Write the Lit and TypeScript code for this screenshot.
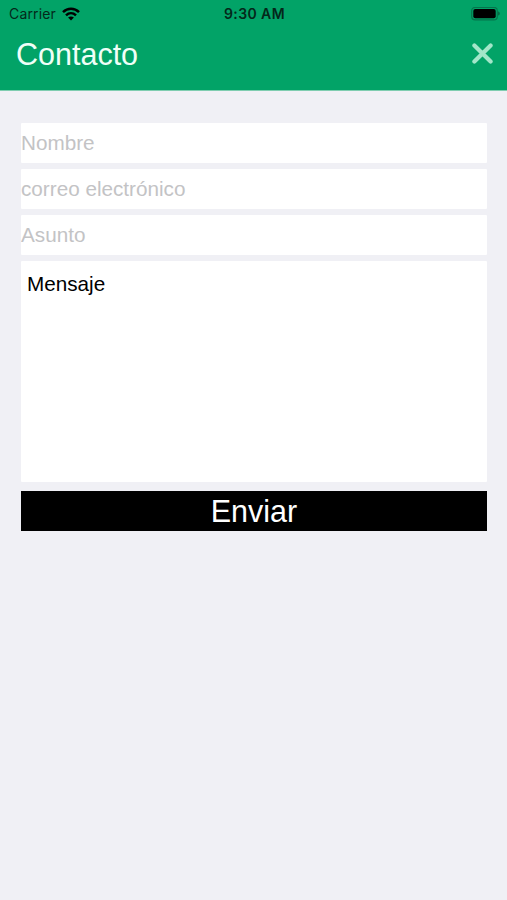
import { LitElement, html, css } from "lit";
import { customElement } from "lit/decorators.js";

@customElement("status-bar")
class StatusBar extends LitElement {
  static styles = css`
    :host {
      display: grid;
      grid-template-columns: 1fr auto 1fr;
      align-items: center;
      height: 27px;
      padding: 0 7px 0 9px;
      color: #04281a;
      font-family: Inter, "Liberation Sans", sans-serif;
      font-size: 14px;
    }
    .carrier { display: flex; align-items: center; gap: 6px; }
    .name { letter-spacing: 0.15px; }
    .time { font-weight: 600; font-size: 14px; letter-spacing: 0.4px; }
    .battery { justify-self: end; }
    svg { display: block; }
  `;
  render() {
    return html`
      <div class="carrier">
        <span class="name">Carrier</span>
        <svg width="18" height="14" viewBox="0 0 18 14" fill="none" stroke="#000" stroke-width="2.5">
          <path d="M1 5.2C5.6.7 12.4.7 17 5.2" />
          <path d="M4 8.3c2.9-2.7 7.1-2.7 10 0" />
          <path d="M9 13.6 6.1 10.6c1.7-1.5 4.1-1.5 5.8 0z" fill="#000" stroke="none" />
        </svg>
      </div>
      <span class="time">9:30 AM</span>
      <svg class="battery" width="29" height="14" viewBox="0 0 29 14">
        <rect x=".7" y=".4" width="25.6" height="12.4" rx="3.4" fill="none" stroke="#05754c" stroke-width="1.2" />
        <rect x="2.3" y="2" width="22.4" height="9.2" rx="2" fill="#000" />
        <path d="M27.2 4.4c2 .5 2 3.7 0 4.2z" fill="#05603f" />
      </svg>
    `;
  }
}

@customElement("app-root")
class AppRoot extends LitElement {
  static styles = css`
    :host {
      display: flex;
      flex-direction: column;
      min-height: 100vh;
      background: #f0f0f5;
      font-family: "Liberation Sans", Arial, sans-serif;
    }
    .header { height: 90px; border-bottom: 1px solid #7fcdb0; box-sizing: content-box; background: #02a367; }
    .bar {
      display: flex;
      align-items: center;
      justify-content: space-between;
      height: 53px;
      padding: 0 14px 0 16px;
    }
    .title {
      margin: 0;
      font-size: 30.5px;
      font-weight: 400;
      line-height: 52px;
      color: #effff7;
    }
    .close { display: block; padding: 0; border: 0; background: none; }
    .close svg { display: block; }
    .form {
      display: flex;
      flex-direction: column;
      gap: 6px;
      padding: 32px 20px 0 21px;
    }
    .field, .message, .send {
      box-sizing: border-box;
      width: 100%;
      margin: 0;
      border: 0;
      border-radius: 1px;
      font-family: inherit;
      outline: none;
    }
    .field { height: 40px; padding: 0; background: #fff; font-size: 20.7px; }
    .field::placeholder { color: #c3c3c5; opacity: 1; }
    .message {
      display: block;
      height: 221px;
      padding: 11px 6px;
      background: #fff;
      color: #000;
      font-size: 20.7px;
      line-height: 24px;
      resize: none;
    }
    .send {
      height: 40px;
      margin-top: 3px;
      padding: 0;
      border-radius: 0;
      background: #000;
      color: #fff;
      font-size: 30.5px;
      line-height: 40px;
    }
  `;
  render() {
    return html`
      <header class="header">
        <status-bar></status-bar>
        <div class="bar">
          <h1 class="title">Contacto</h1>
          <button class="close" aria-label="Cerrar">
            <svg width="21" height="21" viewBox="0 0 21 21" stroke="#a3e6c9" stroke-width="4.2" stroke-linecap="round">
              <path d="M2.4 2.4 18.6 18.6M18.6 2.4 2.4 18.6" />
            </svg>
          </button>
        </div>
      </header>
      <form class="form">
        <input class="field" placeholder="Nombre" />
        <input class="field" placeholder="correo electrónico" />
        <input class="field" placeholder="Asunto" />
        <textarea class="message" .value=${"Mensaje"}></textarea>
        <button class="send" type="button">Enviar</button>
      </form>
    `;
  }
}
